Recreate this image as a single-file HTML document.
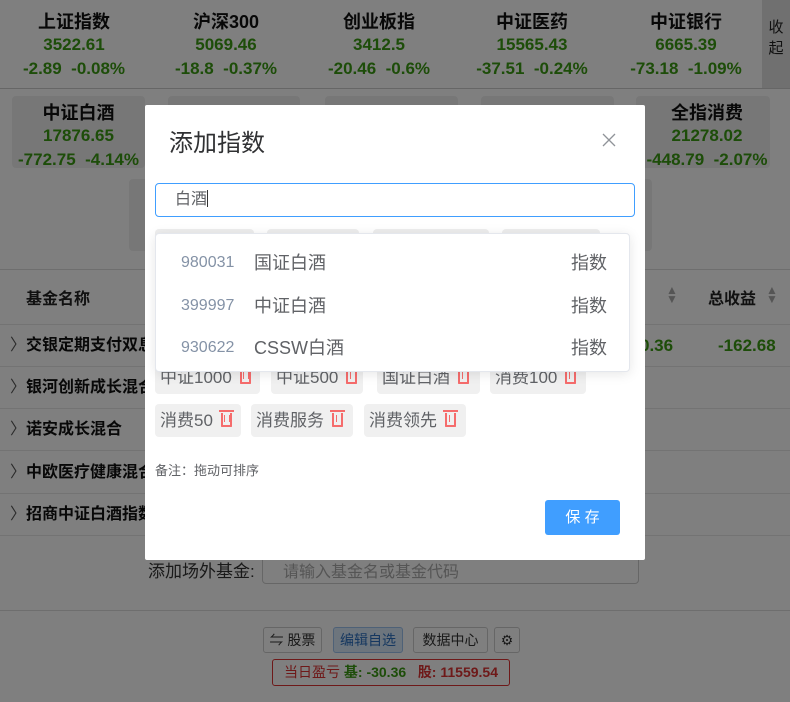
<!DOCTYPE html>
<html><head><meta charset="utf-8"><style>
*{margin:0;padding:0;box-sizing:border-box}
body{width:790px;height:702px;position:relative;overflow:hidden;background:#fff;font-family:"Liberation Sans","Noto Sans CJK SC",sans-serif}
.a{position:absolute}
.g{color:#3a9a12;font-weight:bold}
.idx{position:absolute;text-align:center;font-weight:bold}
.idx .n{font-size:18px;color:#111;height:24px;line-height:24px}
.idx .v{font-size:17px;color:#3a9a12;height:22px;line-height:22px}
.card{position:absolute;background:#eee;border-radius:4px}
.row{position:absolute;left:0;width:790px;height:42px;border-bottom:1px solid #e6e6e6;font-size:16px;font-weight:bold;color:#111;line-height:42px}
.row span{position:absolute;left:26px}
.row i{position:absolute;left:10px;top:0;font-style:normal;font-weight:normal;color:#555}
.ov{position:absolute;left:0;top:0;width:790px;height:702px;background:rgba(0,0,0,.5)}
.btn{position:absolute;top:627px;height:26px;border:1px solid #ccc;border-radius:3px;font-size:14px;line-height:24px;text-align:center;color:#333;background:#fff}
.tag{position:absolute;height:33px;background:#f0f0f0;border-radius:4px;font-size:17px;color:#606266;line-height:33px;padding-left:5px}
.tr{display:inline-block;width:11px;height:14px;border:2px solid #f56c6c;border-top:none;border-radius:0 0 1px 1px;position:relative;vertical-align:-1px;margin-left:8px}
.tr:before{content:"";position:absolute;left:-4px;top:-3px;width:15px;height:2px;background:#f56c6c}
.tr:after{content:"";position:absolute;left:1.5px;top:2px;width:4px;height:7px;border-left:1.5px solid #f56c6c;border-right:1.5px solid #f56c6c}
.dd{position:absolute;left:155px;top:233px;width:475px;height:139px;background:#fff;border:1px solid #e4e7ed;box-shadow:0 2px 12px rgba(0,0,0,.1);border-radius:4px}
.it{position:absolute;left:0;width:475px;height:42px;line-height:42px}
.it .c{position:absolute;left:25px;font-size:16px;color:#8492a6}
.it .m{position:absolute;left:98px;font-size:18px;color:#606266}
.it .t{position:absolute;right:24px;font-size:18px;color:#606266}
.srt{position:absolute;color:#aaa;font-size:12px;line-height:9px}
</style></head><body>
<div class="idx" style="left:0;width:148px;top:10px"><div class="n">上证指数</div><div class="v">3522.61</div><div class="v" style="margin-top:2px">-2.89&nbsp; -0.08%</div></div>
<div class="idx" style="left:152px;width:148px;top:10px"><div class="n">沪深300</div><div class="v">5069.46</div><div class="v" style="margin-top:2px">-18.8&nbsp; -0.37%</div></div>
<div class="idx" style="left:305px;width:148px;top:10px"><div class="n">创业板指</div><div class="v">3412.5</div><div class="v" style="margin-top:2px">-20.46&nbsp; -0.6%</div></div>
<div class="idx" style="left:457px;width:150px;top:10px"><div class="n">中证医药</div><div class="v">15565.43</div><div class="v" style="margin-top:2px">-37.51&nbsp; -0.24%</div></div>
<div class="idx" style="left:610px;width:152px;top:10px"><div class="n">中证银行</div><div class="v">6665.39</div><div class="v" style="margin-top:2px">-73.18&nbsp; -1.09%</div></div>
<div class="a" style="left:762px;top:0;width:28px;height:88px;background:#e0e0e0;font-size:15px;color:#222;text-align:center;padding-top:17px;line-height:21px">收<br>起</div>
<div class="a" style="left:0;top:88px;width:790px;height:1px;background:#ccc"></div>
<div class="card" style="left:12px;top:96px;width:133px;height:72px"></div>
<div class="card" style="left:168px;top:96px;width:132px;height:72px"></div>
<div class="card" style="left:325px;top:96px;width:133px;height:72px"></div>
<div class="card" style="left:481px;top:96px;width:133px;height:72px"></div>
<div class="card" style="left:636px;top:96px;width:134px;height:72px"></div>
<div class="idx" style="left:12px;width:133px;top:101px"><div class="n">中证白酒</div><div class="v">17876.65</div><div class="v" style="margin-top:2px">-772.75&nbsp; -4.14%</div></div>
<div class="idx" style="left:640px;width:134px;top:101px"><div class="n">全指消费</div><div class="v">21278.02</div><div class="v" style="margin-top:2px">-448.79&nbsp; -2.07%</div></div>
<div class="card" style="left:129px;top:179px;width:523px;height:72px"></div>
<div class="a" style="left:0;top:269px;width:790px;height:1px;background:#ddd"></div>
<div class="a" style="left:26px;top:285px;font-size:16px;font-weight:bold;color:#222">基金名称</div>
<div class="a" style="left:628px;top:285px;font-size:16px;font-weight:bold;color:#222">益</div>
<div class="a" style="left:708px;top:285px;font-size:16px;font-weight:bold;color:#222">总收益</div>
<div class="srt" style="left:766px;top:286px">▲<br>▼</div>
<div class="srt" style="left:666px;top:286px">▲<br>▼</div>
<div class="a" style="left:0;top:324px;width:790px;height:1px;background:#e6e6e6"></div>
<div class="row" style="top:325px"><i>〉</i><span>交银定期支付双息</span><b class="g a" style="left:640px;font-size:17px">0.36</b><b class="g a" style="left:718px;font-size:17px">-162.68</b></div>
<div class="row" style="top:367px"><i>〉</i><span>银河创新成长混合</span></div>
<div class="row" style="top:409px"><i>〉</i><span>诺安成长混合</span></div>
<div class="row" style="top:452px"><i>〉</i><span>中欧医疗健康混合</span></div>
<div class="row" style="top:494px"><i>〉</i><span>招商中证白酒指数</span></div>
<div class="a" style="left:148px;top:557px;font-size:17px;color:#333">添加场外基金:</div>
<div class="a" style="left:262px;top:547px;width:377px;height:37px;border:1px solid #ccc;border-radius:4px;font-size:16px;color:#aaa;padding:10px 0 0 20px">请输入基金名或基金代码</div>
<div class="a" style="left:0;top:610px;width:790px;height:92px;background:#fff;border-top:1px solid #ddd"></div>
<div class="btn" style="left:263px;width:59px">⇋ 股票</div>
<div class="btn" style="left:333px;width:70px;background:#dbeafa;border-color:#9cc3ee;color:#2a6fc0">编辑自选</div>
<div class="btn" style="left:413px;width:75px">数据中心</div>
<div class="btn" style="left:494px;width:26px">⚙</div>
<div class="a" style="left:272px;top:659px;width:238px;height:27px;border:1px solid #d33;border-radius:3px;background:#fff;font-size:14px;line-height:25px;text-align:center;color:#d33">当日盈亏 <b style="color:#3a9a12">基: -30.36</b>&nbsp;&nbsp; <b>股: 11559.54</b></div>
<div class="ov"></div>
<div class="a" style="left:145px;top:105px;width:500px;height:455px;background:#fff;border-radius:2px"></div>
<div class="a" style="left:169px;top:129px;font-size:24px;color:#303133;line-height:30px">添加指数</div>
<svg class="a" style="left:602px;top:133px" width="14" height="14" viewBox="0 0 14 14"><path d="M1 1L13 13M13 1L1 13" stroke="#909399" stroke-width="1.3"/></svg>
<div class="a" style="left:155px;top:183px;width:480px;height:34px;border:1px solid #409eff;border-radius:4px;font-size:16px;color:#606266;line-height:32px;padding-left:19px">白酒<span style="display:inline-block;width:1px;height:17px;background:#333;vertical-align:-3px"></span></div>
<div class="tag" style="left:155px;top:229px;width:99px;background:#eee"></div>
<div class="tag" style="left:267px;top:229px;width:92px;background:#eee"></div>
<div class="tag" style="left:373px;top:229px;width:116px;background:#eee"></div>
<div class="tag" style="left:502px;top:229px;width:98px;background:#eee"></div>
<div class="tag" style="left:155px;top:361px;width:105px">中证1000<i class="tr"></i></div>
<div class="tag" style="left:271px;top:361px;width:92px">中证500<i class="tr"></i></div>
<div class="tag" style="left:377px;top:361px;width:103px">国证白酒<i class="tr"></i></div>
<div class="tag" style="left:490px;top:361px;width:96px">消费100<i class="tr"></i></div>
<div class="tag" style="left:155px;top:404px;width:86px">消费50<i class="tr"></i></div>
<div class="tag" style="left:251px;top:404px;width:102px">消费服务<i class="tr"></i></div>
<div class="tag" style="left:364px;top:404px;width:102px">消费领先<i class="tr"></i></div>
<div class="dd">
<div class="it" style="top:8px"><span class="c">980031</span><span class="m">国证白酒</span><span class="t">指数</span></div>
<div class="it" style="top:51px"><span class="c">399997</span><span class="m">中证白酒</span><span class="t">指数</span></div>
<div class="it" style="top:93px"><span class="c">930622</span><span class="m">CSSW白酒</span><span class="t">指数</span></div>
</div>
<div class="a" style="left:155px;top:460px;font-size:13px;color:#606266">备注：拖动可排序</div>
<div class="a" style="left:545px;top:500px;width:75px;height:35px;background:#409eff;border-radius:3px;color:#fff;font-size:15px;line-height:35px;text-align:center">保 存</div>
</body></html>
